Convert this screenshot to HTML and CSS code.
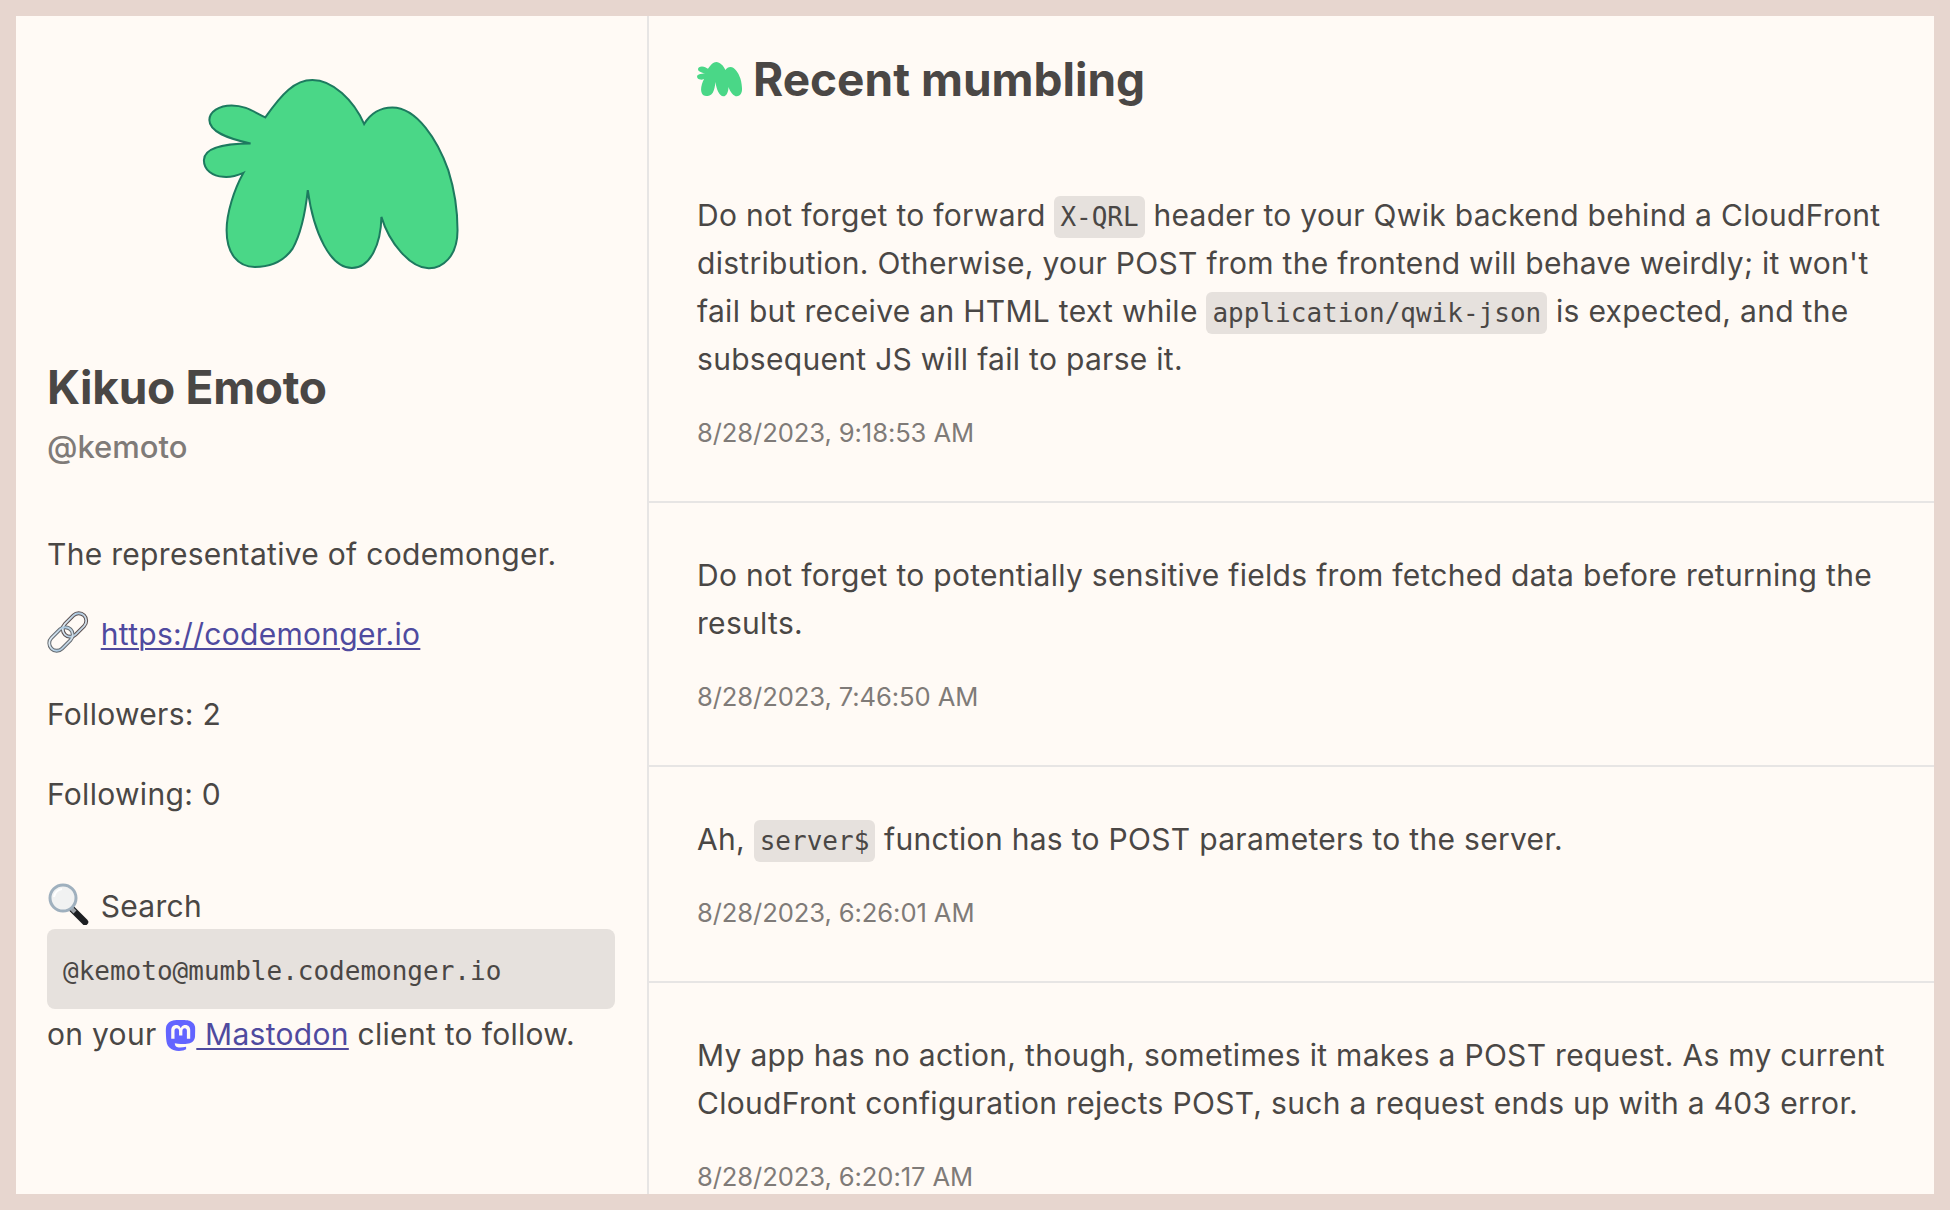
FILE: index.html
```html
<!DOCTYPE html>
<html lang="en">
<head>
<meta charset="utf-8">
<title>Kikuo Emoto</title>
<link rel="stylesheet" href="styles.css">
</head>
<body>
<svg class="defs" width="0" height="0" aria-hidden="true">
  <symbol id="blob" viewBox="470 225 630 590" preserveAspectRatio="none">
    <path vector-effect="non-scaling-stroke" d="M630 352C670 280 700 240 742 240C790 240 840 300 865 372C880 340 905 322 932 322C990 322 1040 420 1065 510C1080 570 1087 640 1087 690C1087 770 1050 805 1018 804C975 802 925 730 906 650C905 730 880 803 836 803C785 803 745 700 731 570C725 640 715 700 695 745C670 790 635 800 605 800C565 800 538 760 538 690C538 640 555 570 578 518C560 528 545 532 530 530C505 528 484 510 484 480C484 445 530 430 595 430C540 415 497 395 497 360C497 335 520 316 550 316C585 316 605 338 630 352Z"/>
  </symbol>
</svg>
<div class="frame">
  <aside class="side">
    <div class="logo-wrap"><svg class="logo" role="img" aria-label="Mumble logo"><use href="#blob"/></svg></div>
    <h1 class="name">Kikuo Emoto</h1>
    <p class="handle">@kemoto</p>
    <p class="para">The representative of codemonger.</p>
    <p class="para"><svg class="emoji" viewBox="0 0 42 42" aria-hidden="true">
      <defs><linearGradient id="chain" x1="0" y1="0" x2="1" y2="1"><stop offset="0" stop-color="#eef3f7"/><stop offset=".5" stop-color="#a9c8e0"/><stop offset="1" stop-color="#dbe3e9"/></linearGradient></defs>
      <g fill="none" stroke-width="3.8"><rect x="-13.5" y="-7.5" width="27" height="15" rx="7.5" stroke="#5c5152" transform="translate(27.5 14) rotate(-45)"/><rect x="-13.5" y="-7.5" width="27" height="15" rx="7.5" stroke="#646a70" transform="translate(14 28) rotate(-45)"/></g>
      <g fill="none" stroke="url(#chain)" stroke-width="1.8"><rect x="-13.5" y="-7.5" width="27" height="15" rx="7.5" transform="translate(27.5 14) rotate(-45)"/><rect x="-13.5" y="-7.5" width="27" height="15" rx="7.5" transform="translate(14 28) rotate(-45)"/></g>
    </svg> <a class="link" href="#">https://codemonger.io</a></p>
    <p class="para">Followers: 2</p>
    <p class="para">Following: 0</p>
    <div class="search">
      <div class="search-label"><svg class="emoji" viewBox="0 0 42 42" aria-hidden="true">
        <path d="M25 26L38 39" stroke="#1d1f22" stroke-width="6.5" stroke-linecap="round"/>
        <path d="M24 25L28 29" stroke="#9aa0a6" stroke-width="4"/>
        <circle cx="16" cy="15" r="13" fill="#f1f2f2" stroke="#9fb0be" stroke-width="3"/>
        <path d="M7 14A9 9 0 0 1 15 6" fill="none" stroke="#fff" stroke-width="2"/>
      </svg> Search</div>
      <pre class="address">@kemoto@mumble.codemonger.io</pre>
      <div class="search-note">on your <a class="link" href="#"><svg class="masto" viewBox="0 0 24 24" aria-hidden="true"><path d="M23.268 5.313c-.35-2.578-2.617-4.61-5.304-5.004C17.51.242 15.792 0 11.813 0h-.03c-3.98 0-4.835.242-5.288.309C3.882.692 1.496 2.518.917 5.127.64 6.412.61 7.837.661 9.143c.074 1.874.088 3.745.26 5.611.118 1.24.325 2.47.62 3.68.55 2.237 2.777 4.098 4.96 4.857 2.336.792 4.849.923 7.256.38.265-.061.527-.132.786-.213.585-.184 1.27-.39 1.774-.753a.057.057 0 0 0 .023-.043v-1.809a.052.052 0 0 0-.02-.041.053.053 0 0 0-.046-.01 20.282 20.282 0 0 1-4.709.545c-2.73 0-3.463-1.284-3.674-1.818a5.593 5.593 0 0 1-.319-1.433.053.053 0 0 1 .066-.054c1.517.363 3.072.546 4.632.546.376 0 .75 0 1.125-.01 1.57-.044 3.224-.124 4.768-.422.038-.008.077-.015.11-.024 2.435-.464 4.753-1.92 4.989-5.604.008-.145.03-1.52.03-1.67.002-.512.167-3.63-.024-5.545zm-3.748 9.195h-2.561V8.29c0-1.309-.55-1.976-1.67-1.976-1.23 0-1.846.79-1.846 2.35v3.403h-2.546V8.663c0-1.56-.617-2.35-1.848-2.35-1.112 0-1.668.668-1.67 1.977v6.218H4.822V8.102c0-1.31.337-2.35 1.011-3.12.696-.77 1.608-1.164 2.74-1.164 1.311 0 2.302.5 2.962 1.498l.638 1.06.638-1.06c.66-.999 1.65-1.498 2.96-1.498 1.13 0 2.043.395 2.74 1.164.675.77 1.012 1.81 1.012 3.12z"/></svg> Mastodon</a> client to follow.</div>
    </div>
  </aside>
  <main class="feed">
    <h2 class="feed-title"><svg class="mini-logo" aria-hidden="true"><use href="#blob"/></svg> Recent mumbling</h2>
    <article class="post">
      <p class="post-text">Do not forget to forward <code class="chip">X-QRL</code> header to your Qwik backend behind a CloudFront distribution. Otherwise, your POST from the frontend will behave weirdly; it won't fail but receive an HTML text while <code class="chip">application/qwik-json</code> is expected, and the subsequent JS will fail to parse it.</p>
      <p class="time">8/28/2023, 9:18:53 AM</p>
    </article>
    <article class="post">
      <p class="post-text">Do not forget to potentially sensitive fields from fetched data before returning the results.</p>
      <p class="time">8/28/2023, 7:46:50 AM</p>
    </article>
    <article class="post">
      <p class="post-text">Ah, <code class="chip">server$</code> function has to POST parameters to the server.</p>
      <p class="time">8/28/2023, 6:26:01 AM</p>
    </article>
    <article class="post">
      <p class="post-text">My app has no action, though, sometimes it makes a POST request. As my current CloudFront configuration rejects POST, such a request ends up with a 403 error.</p>
      <p class="time">8/28/2023, 6:20:17 AM</p>
    </article>
  </main>
</div>
</body>
</html>
```
FILE: styles.css
```css
* { box-sizing: border-box; }
html, body { margin: 0; height: 100%; overflow: hidden; }
body {
  background: #e7d6cf;
  color: #4a4745;
  font-family: Inter, "Noto Sans", sans-serif;
  font-size: 30px;
  line-height: 48px;
  letter-spacing: 0.3px;
}
.defs { display: block; height: 0; }
.frame {
  display: grid;
  grid-template-columns: 633px 1fr;
  height: calc(100vh - 32px);
  margin: 16px;
  background: #fffaf5;
  overflow: hidden;
}
.side { padding: 59px 32px 0 31px; border-right: 2px solid #e7e5e4; }
.logo-wrap { display: flex; justify-content: center; }
.logo { display: block; width: 265px; height: 197px; margin-right: 2px; fill: #4ad787; stroke: #1d7a5f; stroke-width: 2px; }
.name { margin: 83px 0 0; font-size: 46px; line-height: 64px; font-weight: 700; letter-spacing: -0.3px; }
.handle { margin: 0 0 55px; font-size: 31px; line-height: 56px; font-weight: 500; letter-spacing: 0; color: #7f7b78; }
.para { margin: 0 0 32px; }
.emoji { display: inline-block; width: 42px; height: 42px; margin-right: 3px; vertical-align: -8px; }
.link { color: #4f4a9f; text-decoration: underline; text-decoration-thickness: 2px; text-underline-offset: 3px; }
.search { margin-top: 64px; }
.search-label { margin: 0; }
.address {
  margin: -1px 0 1px;
  padding: 18px 16px 14px;
  background: #e6e1dd;
  border-radius: 8px;
  font-family: "DejaVu Sans Mono", monospace;
  font-size: 26px;
  line-height: 48px;
  letter-spacing: 0;
}
.search-note { margin: 0; }
.masto { display: inline-block; width: 31px; height: 31px; vertical-align: -6px; fill: #6364ff; }
.feed { overflow: hidden; }
.feed-title {
  display: flex;
  align-items: center;
  gap: 10px;
  margin: 0;
  padding: 31px 48px 32px;
  font-size: 46px;
  line-height: 64px;
  font-weight: 700;
  letter-spacing: 0;
}
.mini-logo { width: 47px; height: 36px; margin-left: -1px; fill: #4ad787; stroke: none; }
.post { padding: 48px; border-bottom: 2px solid #e7e5e4; }
.post:last-child { border-bottom: 0; }
.post-text { margin: 0; }
.chip {
  padding: 6px;
  border-radius: 6px;
  background: #e6e1dd;
  font-family: "DejaVu Sans Mono", monospace;
  font-size: 26px;
  line-height: 1;
  letter-spacing: 0;
}
.time { margin: 29px 0 0; font-size: 25.6px; line-height: 41px; letter-spacing: -0.1px; color: #7f7b78; }
```
